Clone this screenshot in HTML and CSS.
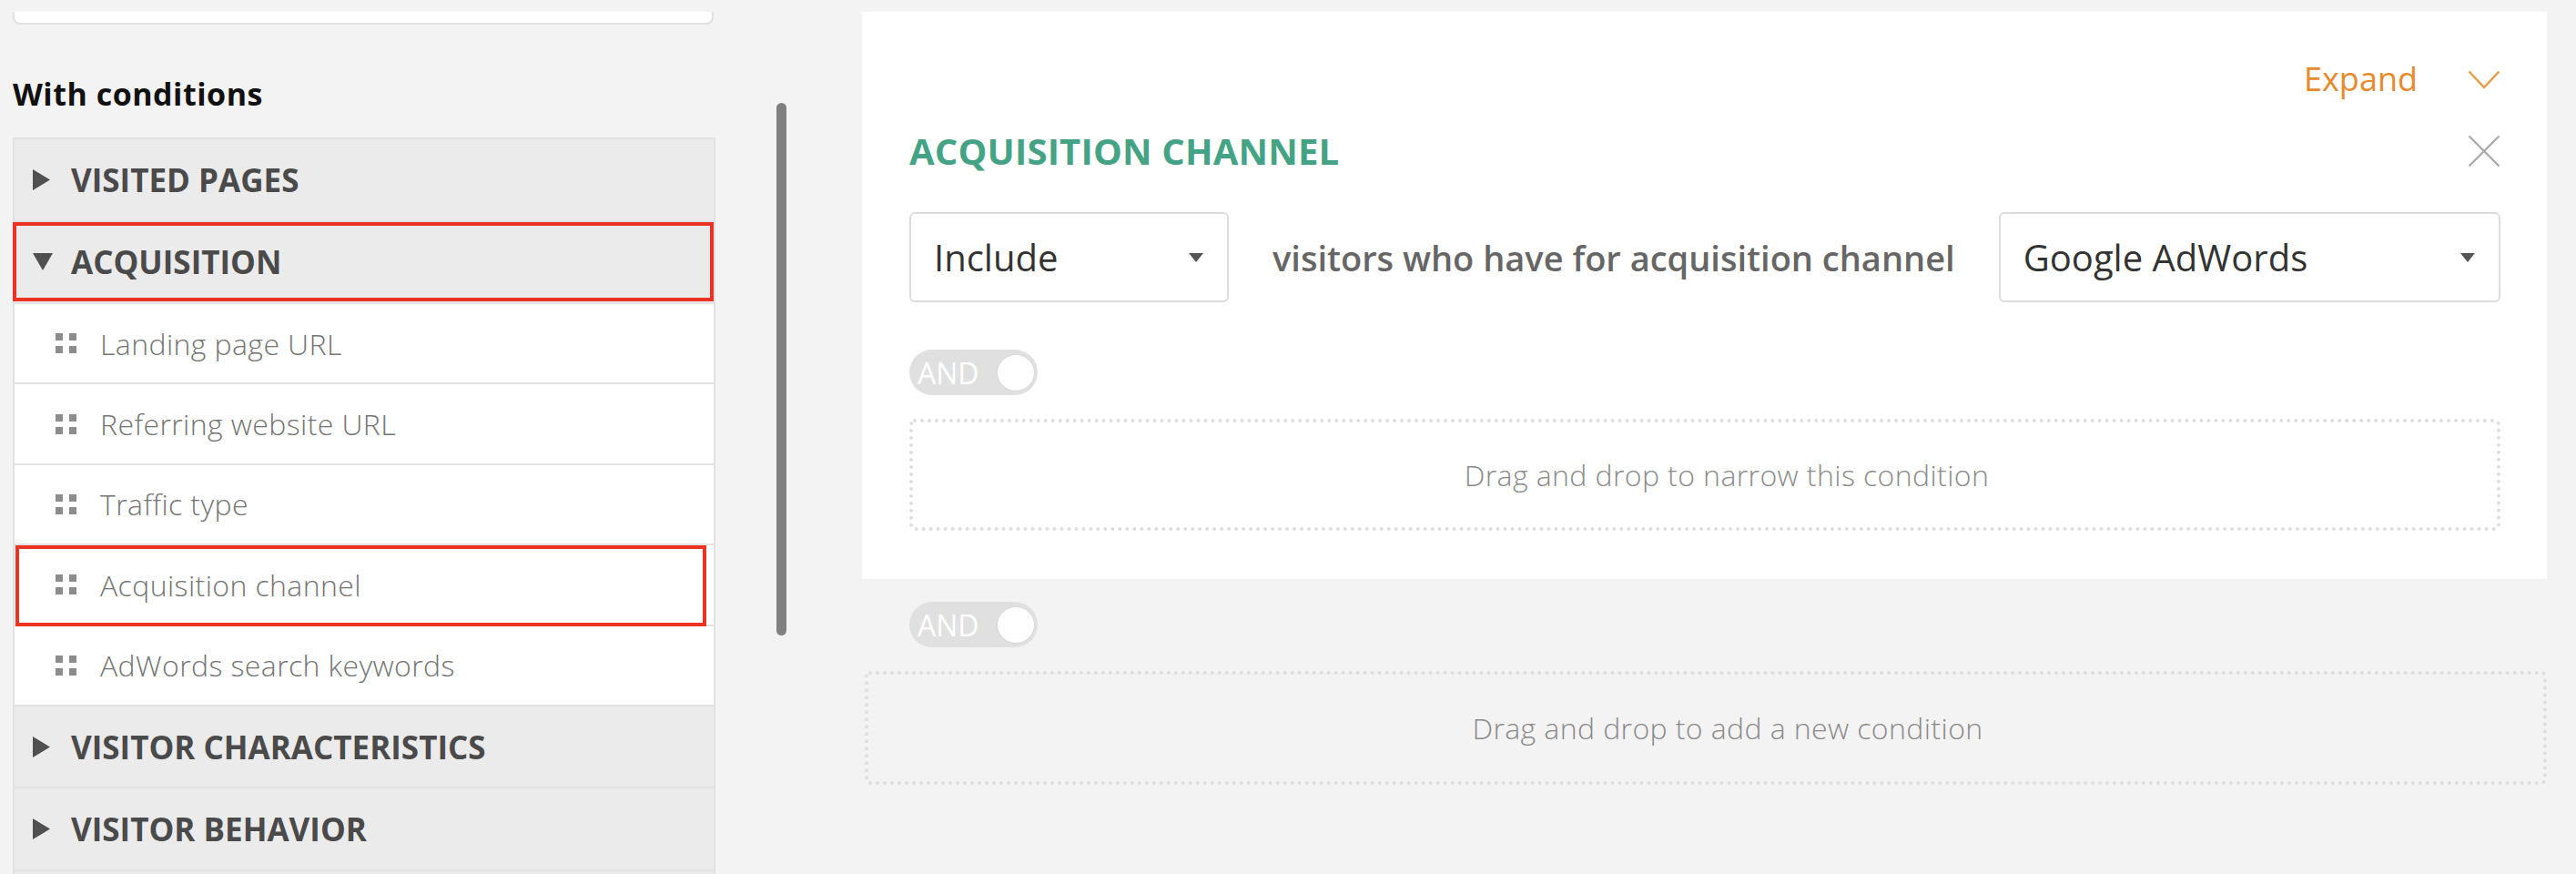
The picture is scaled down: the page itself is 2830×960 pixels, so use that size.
FILE: index.html
```html
<!DOCTYPE html>
<html>

<head>
    <title>Segment conditions</title>
    <link rel="stylesheet" href="styles.css">
</head>

<body>
    <div class="page">
        <div class="sidebar">
            <div class="search-stub"></div>
            <h3 class="side-title">With conditions</h3>
            <ul class="cond-list">
                <li class="group">
                    <svg class="tri" width="19" height="23" viewBox="0 0 19 23"><polygon points="0,0 19,11.5 0,23" /></svg>
                    <span>VISITED PAGES</span>
                </li>
                <li class="group open marked">
                    <svg class="tri" width="22" height="19" viewBox="0 0 22 19"><polygon points="0,0 22,0 11,19" /></svg>
                    <span>ACQUISITION</span>
                </li>
                <li class="item"><span class="handle"><i></i><i></i><i></i><i></i></span>Landing page URL</li>
                <li class="item"><span class="handle"><i></i><i></i><i></i><i></i></span>Referring website URL</li>
                <li class="item"><span class="handle"><i></i><i></i><i></i><i></i></span>Traffic type</li>
                <li class="item marked"><span class="handle"><i></i><i></i><i></i><i></i></span>Acquisition channel</li>
                <li class="item"><span class="handle"><i></i><i></i><i></i><i></i></span>AdWords search keywords</li>
                <li class="group">
                    <svg class="tri" width="19" height="23" viewBox="0 0 19 23"><polygon points="0,0 19,11.5 0,23" /></svg>
                    <span>VISITOR CHARACTERISTICS</span>
                </li>
                <li class="group">
                    <svg class="tri" width="19" height="23" viewBox="0 0 19 23"><polygon points="0,0 19,11.5 0,23" /></svg>
                    <span>VISITOR BEHAVIOR</span>
                </li>
                <li class="group"></li>
            </ul>
        </div>

        <div class="scroll-gutter">
            <div class="scroll-thumb"></div>
        </div>

        <div class="main">
            <div class="card">
                <div class="expand-row">
                    <span class="expand">Expand</span>
                    <svg width="36" height="21" viewBox="0 0 36 21"><polyline points="1.5,1.5 18,19 34.5,1.5" fill="none" stroke="#eb9a45" stroke-width="2.5" /></svg>
                </div>
                <div class="title-row">
                    <h2 class="cond-title">ACQUISITION CHANNEL</h2>
                    <svg width="36" height="36" viewBox="0 0 36 36"><path d="M1.5 1.5 L34.5 34.5 M34.5 1.5 L1.5 34.5" stroke="#a8a8a8" stroke-width="2.2" /></svg>
                </div>
                <div class="rule-row">
                    <div class="select select-mode">
                        <span>Include</span>
                        <span class="caret"></span>
                    </div>
                    <span class="rule-text">visitors who have for acquisition channel</span>
                    <div class="select select-value">
                        <span>Google AdWords</span>
                        <span class="caret"></span>
                    </div>
                </div>
                <div class="toggle"><span>AND</span><i class="knob"></i></div>
                <div class="dropzone">Drag and drop to narrow this condition</div>
            </div>
            <div class="toggle toggle-outer"><span>AND</span><i class="knob"></i></div>
            <div class="dropzone dropzone-outer">Drag and drop to add a new condition</div>
        </div>
    </div>
</body>

</html>
```

FILE: styles.css
```css
body {
    margin: 0;
    background: #f3f3f3;
    font-family: "Open Sans", "Liberation Sans", sans-serif;
}

.page {
    display: flex;
    height: 960px;
    overflow: hidden;
}

/* left column */

.sidebar {
    width: 772px;
    padding-left: 14px;
    flex-shrink: 0;
}

.search-stub {
    margin-top: 13px;
    height: 12px;
    width: 766px;
    background: #fff;
    border: 2px solid #e0e0e0;
    border-top: none;
    border-radius: 0 0 8px 8px;
}

.side-title {
    margin: 54px 0 0;
    font-size: 34px;
    line-height: 44px;
    letter-spacing: 0.5px;
    font-weight: 700;
    color: #111;
}

.cond-list {
    list-style: none;
    margin: 26px 0 0;
    padding: 0;
    border: 2px solid #e2e2e2;
    border-bottom: none;
}

.cond-list>li {
    position: relative;
    display: flex;
    align-items: center;
    box-sizing: border-box;
    border-bottom: 2px solid #e2e2e2;
}

.group {
    height: 90.5px;
    padding-left: 20px;
    gap: 23px;
    background: #ebebeb;
    font-size: 35px;
    font-weight: 700;
    color: #4a4a4a;
}

.group .tri {
    fill: #505050;
}

.group.open {
    gap: 20px;
}

.item {
    height: 88.4px;
    padding-left: 45px;
    gap: 26px;
    background: #fff;
    font-size: 32px;
    letter-spacing: 0.4px;
    font-weight: 300;
    color: #747474;
}

.handle {
    display: grid;
    grid-template-columns: 8px 8px;
    grid-template-rows: 8px 8px;
    gap: 6px 7px;
}

.handle i {
    background: #8c8c8c;
}

.marked::after {
    content: "";
    position: absolute;
    border: 4px solid #eb3323;
}

.group.marked::after {
    left: -2px;
    right: 0;
    top: 0;
    bottom: 1px;
}

.item.marked::after {
    left: 1px;
    right: 8px;
    top: 0;
    bottom: -2px;
}

.scroll-gutter {
    width: 161px;
    flex-shrink: 0;
    padding-top: 113px;
    box-sizing: border-box;
}

.scroll-thumb {
    margin-left: 67px;
    width: 11px;
    height: 585px;
    border-radius: 6px;
    background: #808080;
}

/* right column */

.main {
    width: 1851px;
    flex-shrink: 0;
}

.card {
    margin-top: 13px;
    background: #fff;
    padding: 54px 51px 53px 52px;
}

.expand-row {
    display: flex;
    justify-content: flex-end;
    align-items: center;
    gap: 55px;
    height: 40px;
}

.expand {
    font-size: 36px;
    line-height: 40px;
    color: #e8892b;
}

.title-row {
    display: flex;
    justify-content: space-between;
    align-items: center;
    margin-top: 35px;
}

.cond-title {
    margin: 0;
    font-size: 40px;
    line-height: 48px;
    letter-spacing: 0.2px;
    font-weight: 700;
    color: #45a385;
}

.rule-row {
    display: flex;
    align-items: center;
    gap: 48px;
    margin-top: 43px;
}

.select {
    display: flex;
    align-items: center;
    justify-content: space-between;
    box-sizing: border-box;
    height: 99px;
    padding: 0 26px 0 25px;
    border: 2px solid #dcdcdc;
    border-radius: 6px;
    font-size: 40px;
    color: #333;
}

.select-mode {
    width: 351px;
}

.select-value {
    flex: 1;
}

.caret {
    width: 0;
    height: 0;
    border-left: 8px solid transparent;
    border-right: 8px solid transparent;
    border-top: 10px solid #555;
}

.rule-text {
    font-size: 38px;
    font-weight: 600;
    color: #666;
}

.toggle {
    display: flex;
    align-items: center;
    justify-content: space-between;
    box-sizing: border-box;
    width: 141px;
    height: 50px;
    margin-top: 52px;
    padding: 0 3px 0 9px;
    border-radius: 25px;
    background: #e0e0e0;
    font-size: 32px;
    color: #fff;
}

.knob {
    width: 42px;
    height: 41px;
    box-sizing: border-box;
    border-radius: 50%;
    background: #fff;
    border: 1px solid #d8d8d8;
}

.dropzone {
    display: flex;
    align-items: center;
    justify-content: center;
    box-sizing: border-box;
    height: 123px;
    margin-top: 26px;
    padding-left: 48px;
    border: 4px dotted #dedede;
    border-radius: 6px;
    font-size: 32px;
    letter-spacing: 0.4px;
    font-weight: 300;
    color: #8a8a8a;
}

.toggle-outer {
    margin: 25px 0 0 52px;
}

.dropzone-outer {
    margin: 26px 0 0 3px;
    height: 125px;
}
```
